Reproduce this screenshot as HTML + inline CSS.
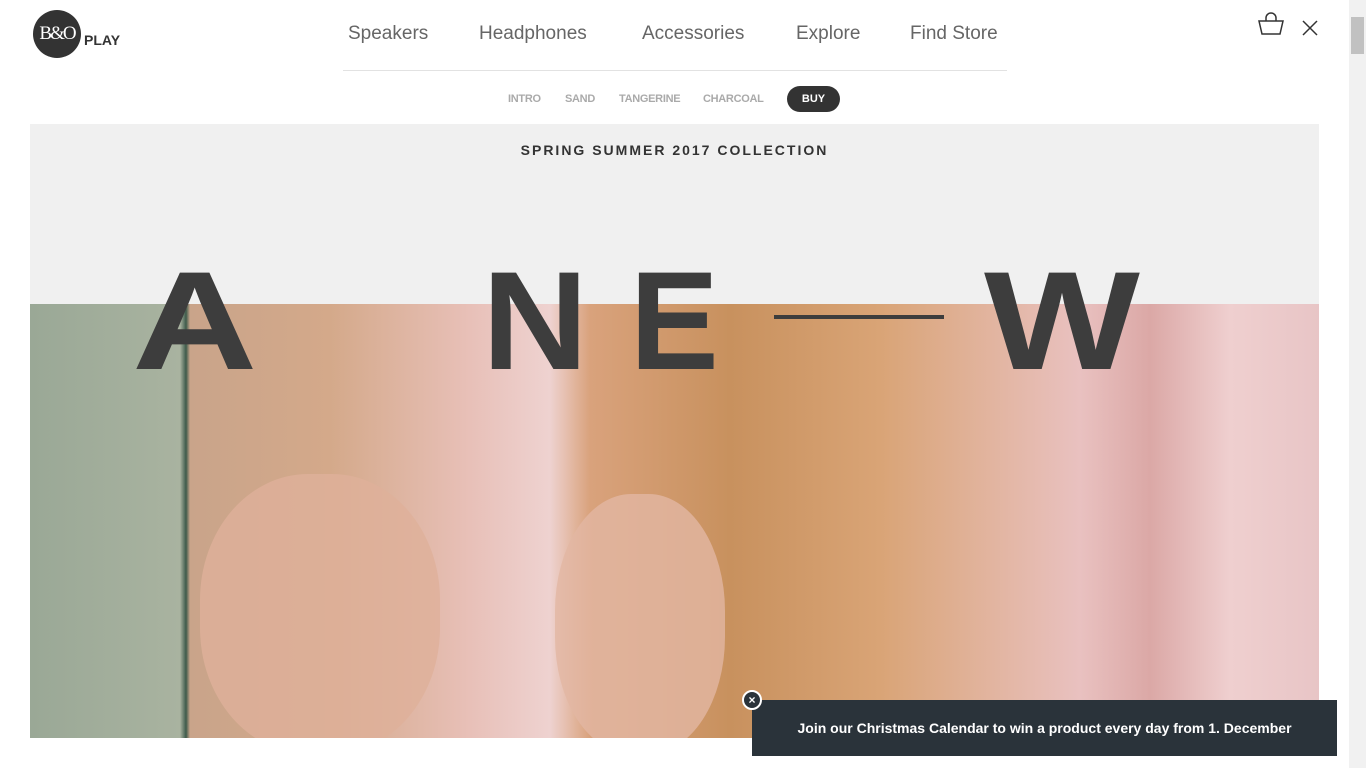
<!DOCTYPE html>
<html><head><meta charset="utf-8"><style>
*{margin:0;padding:0;box-sizing:border-box}
body{width:1366px;height:768px;overflow:hidden;background:#fff;font-family:"Liberation Sans",sans-serif;position:relative}
.logo{position:absolute;left:33px;top:10px;width:48px;height:48px;border-radius:50%;background:#333;color:#fff;font-size:19px;font-family:"Liberation Serif",serif;line-height:48px;text-align:center;letter-spacing:-2px}
.play{position:absolute;left:84px;top:32px;font-size:14px;font-weight:bold;color:#333}
.nav{position:absolute;top:23px;font-size:19px;color:#666}
.line{position:absolute;left:343px;top:70px;width:664px;height:1px;background:#e2e2e2}
.sub{position:absolute;top:93px;font-size:11px;color:#aaa;font-weight:bold;letter-spacing:-0.3px}
.buy{position:absolute;left:787px;top:86px;width:53px;height:26px;border-radius:13px;background:#333;color:#fff;font-size:11px;font-weight:bold;text-align:center;line-height:26px}
.hero{position:absolute;left:30px;top:124px;width:1289px;height:614px;background:#f0f0f0;overflow:hidden}
.photo{position:absolute;left:0;top:180px;width:1289px;height:434px;background:linear-gradient(90deg,#9aa896 0,#a9b3a0 150px,#3d5a4a 156px,#c9a48a 160px,#d4a98a 300px,#e8c0b8 440px,#eed2d0 520px,#d9a27c 560px,#c8915e 700px,#d9a476 850px,#e9c1c0 1050px,#dba8a6 1120px,#efcfcf 1200px,#e8c5c6 1289px)}
.f1{position:absolute;left:170px;top:170px;width:240px;height:280px;border-radius:45%;background:#deb09a;opacity:.8}
.f2{position:absolute;left:525px;top:190px;width:170px;height:260px;border-radius:45%;background:#e2b6a2;opacity:.8}
.t{position:absolute;top:127px;font-size:140px;font-weight:bold;color:#3d3d3d;line-height:1;transform-origin:0 0}
.sc{position:absolute;left:0;width:100%;text-align:center;font-size:14px;font-weight:bold;letter-spacing:2px;color:#333}
.pop{position:absolute;left:752px;top:700px;width:585px;height:56px;background:#2a333a;color:#fff;font-size:14px;font-weight:bold;text-align:center;line-height:56px}
.x{position:absolute;left:742px;top:690px;width:20px;height:20px;border-radius:50%;background:#2a333a;border:2px solid #fff;color:#fff;font-size:12px;line-height:16px;text-align:center;font-weight:bold}
.sb{position:absolute;left:1349px;top:0;width:17px;height:768px;background:#f1f1f1}
.sb div{position:absolute;left:2px;top:17px;width:13px;height:37px;background:#c1c1c1}
</style></head><body>
<div class="logo">B&amp;O</div><div class="play">PLAY</div>
<div class="nav" style="left:348px">Speakers</div>
<div class="nav" style="left:479px">Headphones</div>
<div class="nav" style="left:642px">Accessories</div>
<div class="nav" style="left:796px">Explore</div>
<div class="nav" style="left:910px">Find Store</div>
<div class="line"></div>
<svg style="position:absolute;left:1258px;top:12px" width="26" height="24"><path d="M8 9 V6 a5 5 0 0 1 10 0 V9 M1 9 H25 L22 22 H4 Z" fill="none" stroke="#333" stroke-width="1.5"/></svg>
<svg style="position:absolute;left:1302px;top:20px" width="16" height="16"><path d="M1 1 L15 15 M15 1 L1 15" stroke="#333" stroke-width="1.5"/></svg>
<div class="sub" style="left:508px">INTRO</div>
<div class="sub" style="left:565px">SAND</div>
<div class="sub" style="left:619px">TANGERINE</div>
<div class="sub" style="left:703px">CHARCOAL</div>
<div class="buy">BUY</div>
<div class="hero">
<div class="photo"><div class="f1"></div><div class="f2"></div></div>
<div class="sc" style="top:18px">SPRING SUMMER 2017 COLLECTION</div>
<div class="t" style="left:102px;transform:scaleX(1.24)">A</div>
<div class="t" style="left:452px;transform:scaleX(1.05)">N</div>
<div class="t" style="left:600px;transform:scaleX(0.95)">E</div>
<div style="position:absolute;left:744px;top:191px;width:170px;height:4px;background:#3d3d3d"></div>
<div class="t" style="left:954px;transform:scaleX(1.18)">W</div>
</div>
<div class="pop">Join our Christmas Calendar to win a product every day from 1. December</div>
<div class="x">×</div>
<div class="sb"><div></div></div>
</body></html>
